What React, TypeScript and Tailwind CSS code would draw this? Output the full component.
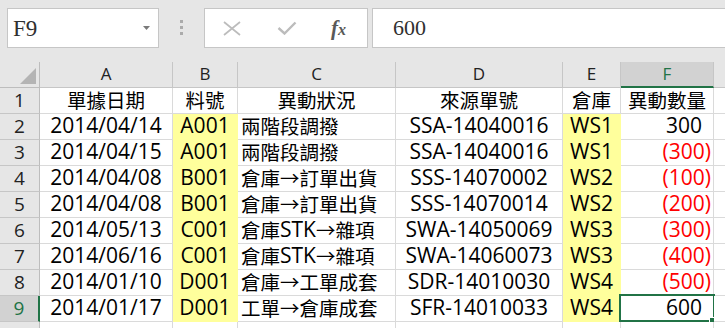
import type { ReactNode } from "react";

type Row = {
  n: number;
  a: string;
  b: string;
  c: string;
  d: string;
  e: string;
  f: string;
  neg?: boolean;
};

const rows: Row[] = [
  { n: 1, a: "單據日期", b: "料號", c: "異動狀況", d: "來源單號", e: "倉庫", f: "異動數量" },
  { n: 2, a: "2014/04/14", b: "A001", c: "兩階段調撥", d: "SSA-14040016", e: "WS1", f: "300" },
  { n: 3, a: "2014/04/15", b: "A001", c: "兩階段調撥", d: "SSA-14040016", e: "WS1", f: "(300)", neg: true },
  { n: 4, a: "2014/04/08", b: "B001", c: "倉庫→訂單出貨", d: "SSS-14070002", e: "WS2", f: "(100)", neg: true },
  { n: 5, a: "2014/04/08", b: "B001", c: "倉庫→訂單出貨", d: "SSS-14070014", e: "WS2", f: "(200)", neg: true },
  { n: 6, a: "2014/05/13", b: "C001", c: "倉庫STK→雜項", d: "SWA-14050069", e: "WS3", f: "(300)", neg: true },
  { n: 7, a: "2014/06/16", b: "C001", c: "倉庫STK→雜項", d: "SWA-14060073", e: "WS3", f: "(400)", neg: true },
  { n: 8, a: "2014/01/10", b: "D001", c: "倉庫→工單成套", d: "SDR-14010030", e: "WS4", f: "(500)", neg: true },
  { n: 9, a: "2014/01/17", b: "D001", c: "工單→倉庫成套", d: "SFR-14010033", e: "WS4", f: "600" },
];

const columns = ["A", "B", "C", "D", "E", "F", ""];

const CJK = /([\u2190-\u21ff\u3000-\u9fff\uf900-\ufaff\uff00-\uffef]+)/;

// Latin runs stay in Open Sans, CJK runs get a slightly smaller CJK face
function Mixed({ text }: { text: string }) {
  const parts = text.split(CJK).filter(Boolean);
  return (
    <>
      {parts.map((p, i) =>
        CJK.test(p) ? (
          <span key={i} className="font-['Noto_Sans_CJK_TC',sans-serif] text-[19.5px] leading-[23px]">
            {p}
          </span>
        ) : (
          <span key={i}>{p}</span>
        ),
      )}
    </>
  );
}

function Cell({
  children,
  align = "center",
  yellow = false,
  className = "",
}: {
  children?: ReactNode;
  align?: "center" | "left" | "right";
  yellow?: boolean;
  className?: string;
}) {
  const justify = align === "left" ? "justify-start pl-[3px]" : align === "right" ? "justify-end" : "justify-center";
  return (
    <div
      className={`relative flex h-[26px] items-start overflow-visible whitespace-nowrap border-b border-r leading-[23px] ${justify} ${
        yellow ? "border-[#ffff9c] bg-[#ffff9c]" : "border-[#dadada] bg-white"
      } ${className}`}
    >
      {children}
    </div>
  );
}

function FormulaBar() {
  return (
    <div className="flex h-[62px] bg-[#e6e6e6] pt-[8px]">
      <div className="ml-[7px] flex h-[40px] w-[152px] shrink-0 items-center justify-between border border-[#c6c6c6] bg-white pl-[5px] pr-[8px]">
        <span className="font-['Liberation_Serif',serif] text-[23px] leading-none text-[#303030]">F9</span>
        <svg width="7" height="4" viewBox="0 0 7 4">
          <path d="M0 0h7L3.5 4z" fill="#7a7a7a" />
        </svg>
      </div>
      <div className="flex w-[45px] shrink-0 flex-col items-center gap-[3px] pt-[12px]">
        <div className="h-[3px] w-[3px] bg-[#ababab]" />
        <div className="h-[3px] w-[3px] bg-[#ababab]" />
        <div className="h-[3px] w-[3px] bg-[#ababab]" />
      </div>
      <div className="flex h-[40px] w-[164px] shrink-0 items-center border border-[#c6c6c6] bg-white pl-[18px]">
        <svg width="18" height="15" viewBox="0 0 18 15">
          <path d="M1 1L17 14M17 1L1 14" stroke="#bcbcbc" strokeWidth="1.7" fill="none" />
        </svg>
        <svg className="ml-[36px]" width="20" height="14" viewBox="0 0 20 14">
          <path d="M1.5 7L7.5 12.5L18.5 1.5" stroke="#bcbcbc" strokeWidth="2.4" fill="none" />
        </svg>
        <span className="ml-[34px] font-['Liberation_Serif',serif] text-[21px] font-bold italic leading-none text-[#595959]">
          f<span className="text-[16px]">x</span>
        </span>
      </div>
      <div className="ml-[4px] flex h-[40px] w-[380px] shrink-0 items-center border border-[#c6c6c6] bg-white pl-[20px]">
        <span className="font-['Liberation_Serif',serif] text-[22px] leading-none text-[#303030]">600</span>
      </div>
    </div>
  );
}

export default function App() {
  return (
    <div className="h-[328px] w-[725px] overflow-hidden bg-white font-['Open_Sans','Noto_Sans_CJK_TC',sans-serif] text-[21px] text-black">
      <FormulaBar />
      <div className="grid grid-cols-[40px_133px_65px_158px_167px_58px_93px_40px]">
        {/* column headers */}
        <div className="flex h-[26px] items-end justify-end border-b border-r border-[#bdbdbd] bg-[#e6e6e6] pb-[3px] pr-[3px]">
          <svg width="16" height="16" viewBox="0 0 16 16">
            <path d="M16 0V16H0z" fill="#b4b4b4" />
          </svg>
        </div>
        {columns.map((c) => (
          <div
            key={c || "g"}
            className={`flex h-[26px] items-start justify-center pt-[1px] text-[17px] leading-[22px] ${
              c === "F"
                ? "border-b-2 border-r border-b-[#217346] border-r-[#c6c6c6] bg-[#d2d2d2] text-[#217346]"
                : "border-b border-r border-[#c6c6c6] bg-[#e6e6e6] text-[#222]"
            }`}
          >
            {c}
          </div>
        ))}

        {rows.map((r) => {
          const head = r.n === 1;
          const sel = r.n === 9;
          return (
            <div key={r.n} className="contents">
              <div
                className={`flex h-[26px] items-start justify-center border-b border-[#c6c6c6] text-[19px] leading-[25px] ${
                  sel
                    ? "border-r-2 border-r-[#217346] bg-[#d2d2d2] text-[#217346]"
                    : "border-r border-r-[#bdbdbd] bg-[#e6e6e6] text-[#222]"
                }`}
              >
                {r.n}
              </div>
              <Cell>
                <Mixed text={r.a} />
              </Cell>
              <Cell yellow={!head}>
                <Mixed text={r.b} />
              </Cell>
              <Cell align={head ? "center" : "left"}>
                <Mixed text={r.c} />
              </Cell>
              <Cell>
                <Mixed text={r.d} />
              </Cell>
              <Cell yellow={!head}>
                <Mixed text={r.e} />
              </Cell>
              <Cell
                align={head ? "center" : "right"}
                className={head ? "" : r.neg ? "pr-[2px] text-[#ff0000]" : "pr-[11px]"}
              >
                <Mixed text={r.f} />
                {sel && (
                  <>
                    <div className="pointer-events-none absolute -bottom-[1px] -left-[2px] -right-[2px] -top-[2px] border-2 border-[#217346]" />
                    <div className="absolute -bottom-[3px] -right-[3px] h-[7px] w-[7px] border border-white bg-[#217346]" />
                  </>
                )}
              </Cell>
              <Cell />
            </div>
          );
        })}

        <div className="flex h-[26px] items-start justify-center border-b border-r border-[#bdbdbd] bg-[#e6e6e6] text-[19px] leading-[25px] text-[#222]">
          10
        </div>
        <Cell />
        <Cell />
        <Cell />
        <Cell />
        <Cell />
        <Cell />
        <Cell />
      </div>
    </div>
  );
}
